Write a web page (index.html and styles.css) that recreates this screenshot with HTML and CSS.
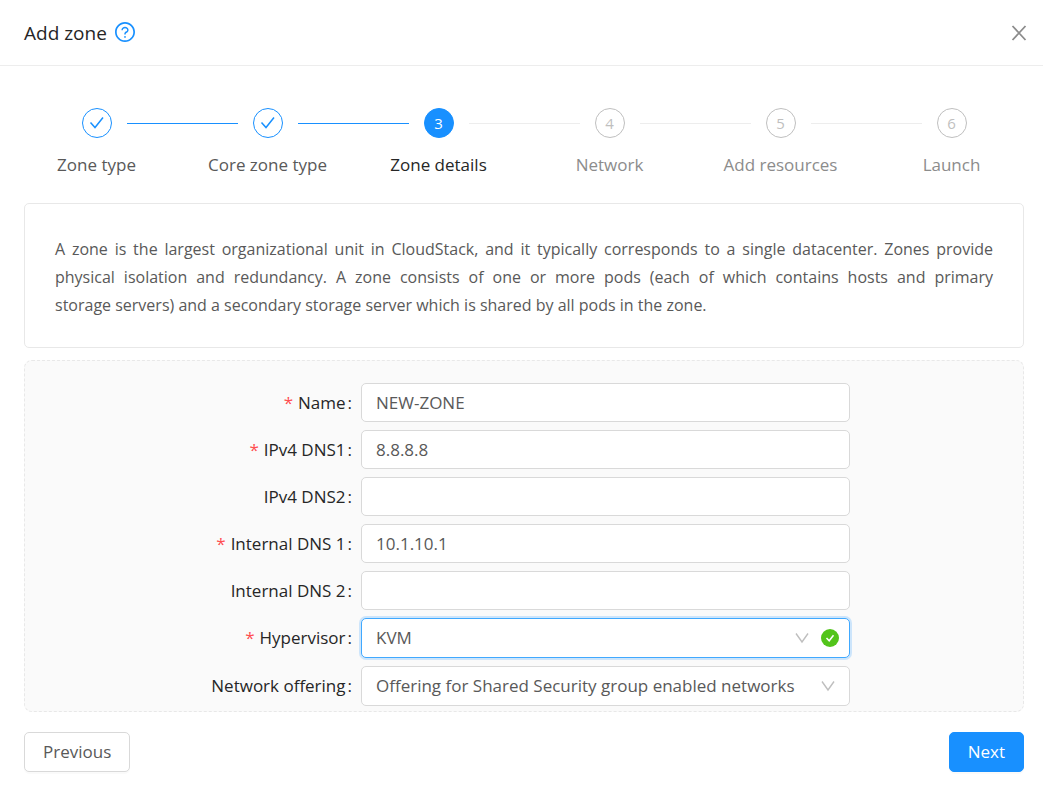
FILE: index.html
```html
<!DOCTYPE html>
<html lang="en">
<head>
<meta charset="utf-8">
<meta name="viewport" content="width=device-width, initial-scale=1">
<title>Add zone</title>
<link rel="stylesheet" href="styles.css">
</head>
<body>
<header class="header">
  <h1 class="title">Add zone</h1>
  <a class="help" href="#help" aria-label="Help">
    <svg viewBox="64 64 896 896" width="20" height="20" fill="currentColor"><path d="M512 64C264.600 64 64 264.600 64 512s200.600 448 448 448 448-200.600 448-448S759.400 64 512 64zm0 820c-205.400 0-372-166.600-372-372s166.600-372 372-372 372 166.600 372 372-166.600 372-372 372z"/><path d="M623.600 316.700C593.600 290.400 554 276 512 276s-81.600 14.500-111.600 40.700C369.200 344 352 380.700 352 420v7.600c0 4.400 3.600 8 8 8h48c4.400 0 8-3.600 8-8V420c0-44.100 43.100-80 96-80s96 35.900 96 80c0 31.100-22 59.600-56.100 72.700-21.200 8.100-39.200 22.300-52.100 40.900-13.100 19-19.900 41.800-19.900 64.900V620c0 4.400 3.600 8 8 8h48c4.400 0 8-3.600 8-8v-22.700a48.300 48.300 0 0 1 30.900-44.800c59-22.700 97.100-74.700 97.100-132.500.1-39.300-17.100-76-48.300-103.300zM472 732a40 40 0 1 0 80 0 40 40 0 1 0-80 0z"/></svg>
  </a>
  <button class="close" type="button" aria-label="Close">
    <svg viewBox="0 0 16 16" width="16" height="16"><path d="M1.500 1 14.500 15M14.500 1 1.500 15" fill="none" stroke="currentColor" stroke-width="1.800"/></svg>
  </button>
</header>

<main class="main">
  <ol class="steps">
    <li class="step done"><div class="track"><span class="dot"><svg viewBox="0 0 16 14" width="16" height="14"><path d="M1.500 6.500 6 11.500 14 1.500" fill="none" stroke="currentColor" stroke-width="1.500"/></svg></span></div><span class="caption">Zone type</span></li>
    <li class="step done"><div class="track"><span class="dot"><svg viewBox="0 0 16 14" width="16" height="14"><path d="M1.500 6.500 6 11.500 14 1.500" fill="none" stroke="currentColor" stroke-width="1.500"/></svg></span></div><span class="caption">Core zone type</span></li>
    <li class="step active" aria-current="step"><div class="track"><span class="dot">3</span></div><span class="caption">Zone details</span></li>
    <li class="step"><div class="track"><span class="dot">4</span></div><span class="caption">Network</span></li>
    <li class="step"><div class="track"><span class="dot">5</span></div><span class="caption">Add resources</span></li>
    <li class="step"><div class="track"><span class="dot">6</span></div><span class="caption">Launch</span></li>
  </ol>

  <p class="intro">A zone is the largest organizational unit in CloudStack, and it typically corresponds to a single datacenter. Zones provide physical isolation and redundancy. A zone consists of one or more pods (each of which contains hosts and primary storage&nbsp;servers) and a secondary storage server which is shared by all pods in the zone.</p>

  <form class="form" id="zone-form">
    <div class="row"><label class="label required" for="name">Name</label><input class="control" id="name" type="text" value="NEW-ZONE"></div>
    <div class="row"><label class="label required" for="dns1">IPv4 DNS1</label><input class="control" id="dns1" type="text" value="8.8.8.8"></div>
    <div class="row"><label class="label" for="dns2">IPv4 DNS2</label><input class="control" id="dns2" type="text"></div>
    <div class="row"><label class="label required" for="idns1">Internal DNS 1</label><input class="control" id="idns1" type="text" value="10.1.10.1"></div>
    <div class="row"><label class="label" for="idns2">Internal DNS 2</label><input class="control" id="idns2" type="text"></div>
    <div class="row">
      <label class="label required" for="hypervisor">Hypervisor</label>
      <div class="picker">
        <select class="control focused" id="hypervisor"><option>KVM</option></select>
        <span class="marks">
          <svg class="chevron" viewBox="0 0 14 12" width="14" height="12"><path d="M1 1.500 7 10 13 1.500" fill="none" stroke="currentColor" stroke-width="1.400"/></svg>
          <svg viewBox="0 0 18 18" width="18" height="18"><circle cx="9" cy="9" r="9" fill="#52c41a"/><path d="M5.500 9 8.200 11.800 12.500 6.200" fill="none" stroke="#fff" stroke-width="1.500"/></svg>
        </span>
      </div>
    </div>
    <div class="row">
      <label class="label" for="offering">Network offering</label>
      <div class="picker">
        <select class="control" id="offering"><option>Offering for Shared Security group enabled networks</option></select>
        <span class="marks plain">
          <svg class="chevron" viewBox="0 0 14 12" width="14" height="12"><path d="M1 1.500 7 10 13 1.500" fill="none" stroke="currentColor" stroke-width="1.400"/></svg>
        </span>
      </div>
    </div>
  </form>

  <footer class="actions">
    <button class="button" type="button">Previous</button>
    <button class="button primary" type="submit" form="zone-form">Next</button>
  </footer>
</main>
</body>
</html>
```

FILE: styles.css
```css
* {
  box-sizing: border-box;
}

body {
  margin: 0;
  background: #fff;
  color: #595959;
  font: 17px/28px "Open Sans", "Noto Sans", sans-serif;
}

svg {
  display: block;
}

.header {
  display: flex;
  align-items: center;
  height: 66px;
  padding: 0 16px 0 24px;
  border-bottom: 1px solid #ededed;
}

.title {
  margin: 0;
  color: #262626;
  font-size: 19px;
  font-weight: 400;
}

.help {
  margin: 0 0 2px 8px;
  color: #1890ff;
}

.close {
  margin-left: auto;
  padding: 0;
  border: 0;
  background: none;
  color: #8c8c8c;
}

.main {
  padding: 42px 19px 24px 24px;
}

.steps {
  display: flex;
  margin: 0 -13px 24px;
  padding: 0;
  list-style: none;
}

.step {
  flex: 1;
  color: #8c8c8c;
  text-align: center;
}

.track {
  display: flex;
  align-items: center;
  gap: 15px;
  margin-bottom: 13px;
}

.track::before,
.track::after {
  content: "";
  flex: 1;
  height: 1px;
  background: #ededed;
}

.step:first-child .track::before,
.step:last-child .track::after {
  visibility: hidden;
}

.done .track::before,
.done .track::after,
.active .track::before {
  background: #1890ff;
}

.dot {
  display: flex;
  align-items: center;
  justify-content: center;
  width: 30px;
  height: 30px;
  border: 1px solid #bfbfbf;
  border-radius: 50%;
  color: #bfbfbf;
  font-size: 15px;
}

.done {
  color: #595959;
}

.done .dot {
  border-color: #1890ff;
  color: #1890ff;
}

.active {
  color: #262626;
}

.active .dot {
  border-color: #1890ff;
  background: #1890ff;
  color: #fff;
}

.caption {
  display: block;
}

.intro {
  margin: 0 0 12px;
  padding: 31px 30px 28px;
  border: 1px solid #e8e8e8;
  border-radius: 5px;
  font-size: 16px;
  text-align: justify;
}

.form {
  display: grid;
  gap: 8px;
  padding: 22px 10px 5px;
  border: 1px dashed #e8e8e8;
  border-radius: 8px;
  background: #fafafa;
}

.row {
  display: grid;
  grid-template-columns: 8fr 12fr 4fr;
  align-items: center;
}

.label {
  padding-right: 9px;
  color: #262626;
  text-align: right;
}

.label::after {
  content: ":";
  margin-left: 2px;
}

.required::before {
  content: "*";
  margin-right: 5px;
  color: #ff4d4f;
}

.control {
  display: block;
  width: 100%;
  height: 39px;
  padding: 0 14px;
  border: 1px solid #d9d9d9;
  border-radius: 5px;
  outline: 0;
  background: #fff;
  color: #595959;
  font: inherit;
  appearance: none;
}

.picker {
  position: relative;
}

.picker .control {
  height: 40px;
}

.control:focus,
.focused {
  border-color: #40a9ff;
  box-shadow: 0 0 0 2px rgba(24, 144, 255, 0.2);
}

.marks {
  position: absolute;
  inset: 0 11px 0 auto;
  display: flex;
  align-items: center;
  gap: 12px;
  pointer-events: none;
}

.marks.plain {
  right: 15px;
}

.chevron {
  color: #bfbfbf;
}

.actions {
  display: flex;
  justify-content: space-between;
  margin-top: 20px;
}

.button {
  height: 40px;
  padding: 0 18px;
  border: 1px solid #d9d9d9;
  border-radius: 5px;
  background: #fff;
  box-shadow: 0 2px 0 rgba(0, 0, 0, 0.02);
  color: #595959;
  font: inherit;
}

.primary {
  border-color: #1890ff;
  background: #1890ff;
  color: #fff;
}
```
